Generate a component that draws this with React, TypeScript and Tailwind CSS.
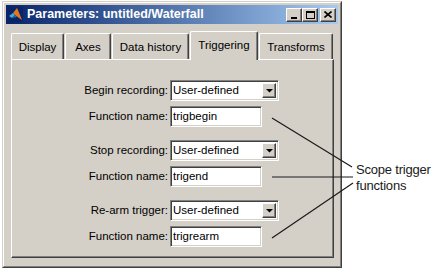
import React from 'react';

const raised =
  'border border-t-white border-l-white border-r-[#404040] border-b-[#404040] shadow-[inset_-1px_-1px_0_#808080]';
const sunken =
  'border border-t-[#808080] border-l-[#808080] border-r-white border-b-white shadow-[inset_1px_1px_0_#404040,inset_-1px_-1px_0_#d4d0c8]';

function TitleButton({ children, className = '' }: { children: React.ReactNode; className?: string }) {
  return (
    <div
      className={`w-[16px] h-[14px] bg-[#d4d0c8] ${raised} flex items-center justify-center ${className}`}
    >
      {children}
    </div>
  );
}

function MatlabIcon() {
  return (
    <svg width="15" height="15" viewBox="0 0 15 15">
      <rect width="15" height="15" fill="#0a246a" />
      <path d="M1 9 L5 6 L7 8 L4 11 Z" fill="#3fa9d8" />
      <path d="M5 6 L9 1 L14 13 L11 11 L7 8 Z" fill="#e8741d" />
      <path d="M9 1 L11 6 L14 13 L12 8 Z" fill="#f8b33a" />
      <path d="M4 11 L7 8 L9 10 Z" fill="#1e6fa8" />
    </svg>
  );
}

function Tab({ label, width, active }: { label: string; width: number; active?: boolean }) {
  if (active) {
    return (
      <div
        className="relative z-10 h-[29px] mb-[-1px] bg-[#d4d0c8] border-t border-l border-r border-t-white border-l-white border-r-[#404040] shadow-[inset_-1px_0_0_#808080] rounded-t-[2px] flex justify-center pt-[5px] text-[11.5px] text-black"
        style={{ width }}
      >
        {label}
      </div>
    );
  }
  return (
    <div
      className="h-[26px] bg-[#d4d0c8] border-t border-l border-r border-t-white border-l-white border-r-[#404040] shadow-[inset_-1px_0_0_#808080] rounded-t-[2px] flex justify-center pt-[5px] text-[11.5px] text-black"
      style={{ width }}
    >
      {label}
    </div>
  );
}

function Dropdown({ value }: { value: string }) {
  return (
    <div className={`w-[109px] h-[21px] bg-white ${sunken} flex items-center justify-between pl-[2px] pr-[2px]`}>
      <span className="text-[11.5px] text-black leading-none">{value}</span>
      <div className={`w-[14px] h-[15px] bg-[#d4d0c8] ${raised} flex items-center justify-center`}>
        <svg width="7" height="4" viewBox="0 0 7 4">
          <path d="M0 0 H7 L3.5 3.5 Z" fill="#000" />
        </svg>
      </div>
    </div>
  );
}

function TextBox({ value }: { value: string }) {
  return (
    <div className={`w-[92px] h-[21px] bg-white ${sunken} flex items-center pl-[2px]`}>
      <span className="text-[11.5px] text-black leading-none">{value}</span>
    </div>
  );
}

function Row({ label, children }: { label: string; children: React.ReactNode }) {
  return (
    <div className="flex items-center h-[21px]">
      <div className="w-[156px] text-right text-[11.5px] text-black">{label}</div>
      <div className="ml-[2px]">{children}</div>
    </div>
  );
}

const groups = [
  { label: 'Begin recording:', fn: 'trigbegin' },
  { label: 'Stop recording:', fn: 'trigend' },
  { label: 'Re-arm trigger:', fn: 'trigrearm' },
];

export default function App() {
  return (
    <div className="relative w-[440px] h-[274px] bg-white overflow-hidden font-['Liberation_Sans',Arial,sans-serif]">
      <div className="ml-[2px] mt-[1px] w-[340px] h-[267px] bg-[#d4d0c8] border border-t-[#d4d0c8] border-l-[#d4d0c8] border-r-[#404040] border-b-[#404040]">
        <div className="h-full border border-t-white border-l-white border-r-[#808080] border-b-[#808080] p-[2px] flex flex-col">
          {/* title bar */}
          <div className="h-[19px] flex items-center pl-[2px] pr-[2px] bg-gradient-to-r from-[#0a246a] to-[#a6caf0]">
            <MatlabIcon />
            <span className="ml-[4px] text-white font-bold text-[12.5px] leading-none">
              Parameters: untitled/Waterfall
            </span>
            <div className="ml-auto flex items-center">
              <TitleButton>
                <div className="w-[6px] h-[2px] bg-black mt-[6px] mr-[1px]" />
              </TitleButton>
              <TitleButton>
                <div className="w-[9px] h-[8px] border border-black border-t-2" />
              </TitleButton>
              <TitleButton className="ml-[2px]">
                <svg width="8" height="7" viewBox="0 0 8 7">
                  <path d="M0.5 0.5 L7.5 6.5 M7.5 0.5 L0.5 6.5" stroke="#000" strokeWidth="1.6" />
                </svg>
              </TitleButton>
            </div>
          </div>

          {/* tabs */}
          <div className="mt-[7px] pl-[5px] pr-[5px] flex flex-col">
            <div className="flex items-end h-[28px]">
              <Tab label="Display" width={53} />
              <div className="ml-[1px]"><Tab label="Axes" width={46} /></div>
              <div className="ml-[1px]"><Tab label="Data history" width={77} /></div>
              <div className="ml-[1px]"><Tab label="Triggering" width={68} active /></div>
              <div className="ml-[1px]"><Tab label="Transforms" width={74} /></div>
            </div>
            <div className="h-[199px] w-[323px] border border-t-white border-l-white border-r-[#404040] border-b-[#404040] shadow-[inset_-1px_-1px_0_#808080] pt-[20px] flex flex-col gap-[13px]">
              {groups.map((g) => (
                <div key={g.fn} className="flex flex-col gap-[5px]">
                  <Row label={g.label}>
                    <Dropdown value="User-defined" />
                  </Row>
                  <Row label="Function name:">
                    <TextBox value={g.fn} />
                  </Row>
                </div>
              ))}
            </div>
          </div>
        </div>
      </div>

      {/* callout lines */}
      <svg className="absolute inset-0 pointer-events-none" width="440" height="274" viewBox="0 0 440 274">
        <line x1="272" y1="118" x2="352" y2="167" stroke="#1a1a1a" strokeWidth="1.2" />
        <line x1="272" y1="177" x2="353" y2="177" stroke="#1a1a1a" strokeWidth="1.2" />
        <line x1="272" y1="238" x2="353" y2="183" stroke="#1a1a1a" strokeWidth="1.2" />
      </svg>

      <div className="absolute left-[356px] top-[162px] text-[13px] leading-[16px] text-[#1a1a1a] tracking-[-0.2px]">
        <div>Scope trigger</div>
        <div>functions</div>
      </div>
    </div>
  );
}
